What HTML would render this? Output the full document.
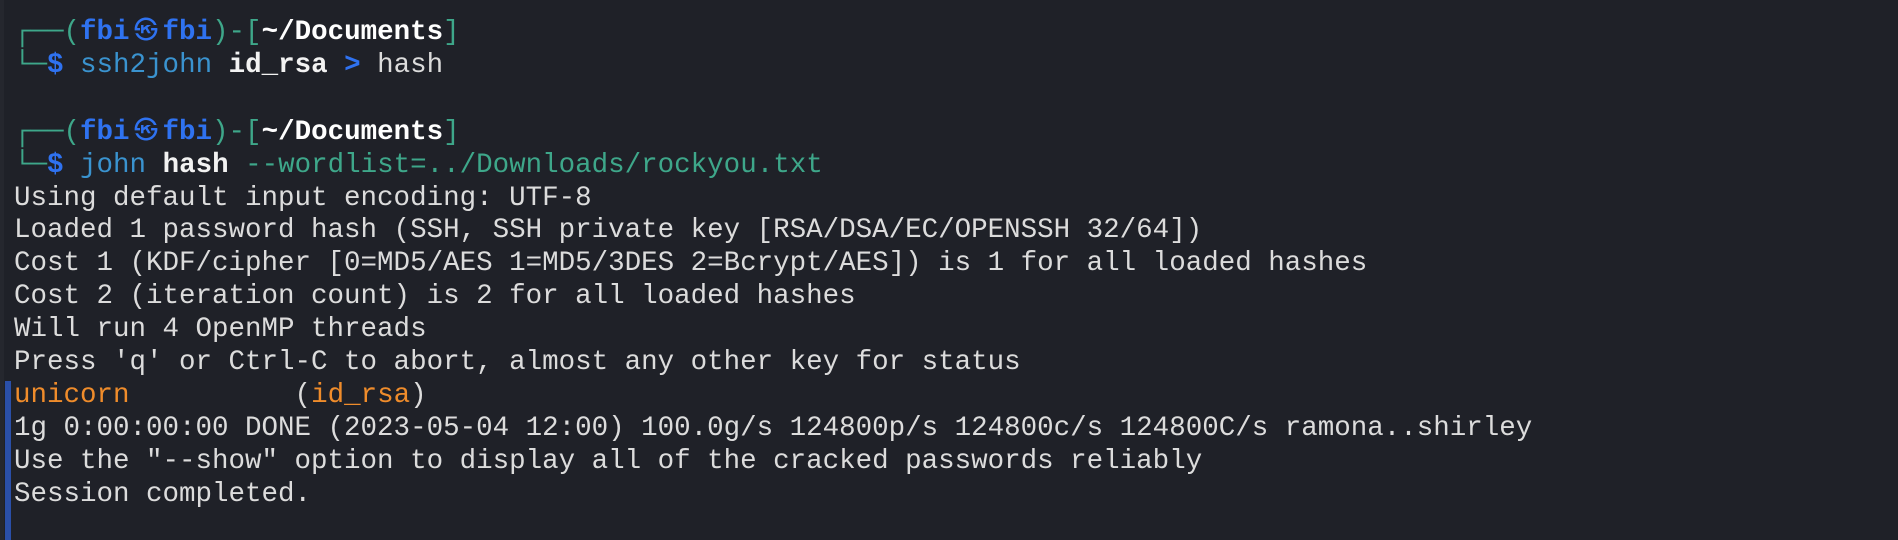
<!DOCTYPE html>
<html><head><meta charset="utf-8"><style>
html,body{margin:0;padding:0;}
body{width:1898px;height:540px;background:#1f2128;position:relative;overflow:hidden;
font-family:"Liberation Mono","DejaVu Sans Mono",monospace;font-size:27.5px;color:#dcdcdc;}
.strip{position:absolute;left:0;top:0;width:4px;height:540px;background:#25272e;}
.bar{position:absolute;left:5px;top:381px;width:6px;height:159px;background:#2a4fa8;}
pre{margin:0;position:absolute;left:14px;top:16px;font:inherit;line-height:32.9px;white-space:pre;}
.g{color:#3ea78a}.b{color:#2f72f0;font-weight:bold}.w{color:#fff;font-weight:bold}
.c{color:#3a93cf}.wb{color:#f2f2f2;font-weight:bold}.h{color:#dcdcdc}
.o{color:#ef8c2b}
.k{display:inline-block;width:33px;text-align:center;color:#2f72f0;font-family:"Noto Sans CJK JP",sans-serif;font-size:24px;font-weight:normal;vertical-align:1px;line-height:1}
</style></head><body>
<div class="strip"></div><div class="bar"></div>
<pre><span class="g">┌──(</span><span class="b">fbi<span class="k">㉿</span>fbi</span><span class="g">)-[</span><span class="w">~/Documents</span><span class="g">]</span>
<span class="g">└─</span><span class="b">$</span> <span class="c">ssh2john</span> <span class="wb">id_rsa</span> <span class="b">&gt;</span> <span class="h">hash</span>

<span class="g">┌──(</span><span class="b">fbi<span class="k">㉿</span>fbi</span><span class="g">)-[</span><span class="w">~/Documents</span><span class="g">]</span>
<span class="g">└─</span><span class="b">$</span> <span class="c">john</span> <span class="wb">hash</span> <span class="g">--wordlist=../Downloads/rockyou.txt</span>
Using default input encoding: UTF-8
Loaded 1 password hash (SSH, SSH private key [RSA/DSA/EC/OPENSSH 32/64])
Cost 1 (KDF/cipher [0=MD5/AES 1=MD5/3DES 2=Bcrypt/AES]) is 1 for all loaded hashes
Cost 2 (iteration count) is 2 for all loaded hashes
Will run 4 OpenMP threads
Press 'q' or Ctrl-C to abort, almost any other key for status
<span class="o">unicorn</span>          (<span class="o">id_rsa</span>)
1g 0:00:00:00 DONE (2023-05-04 12:00) 100.0g/s 124800p/s 124800c/s 124800C/s ramona..shirley
Use the "--show" option to display all of the cracked passwords reliably
Session completed.</pre>
</body></html>
